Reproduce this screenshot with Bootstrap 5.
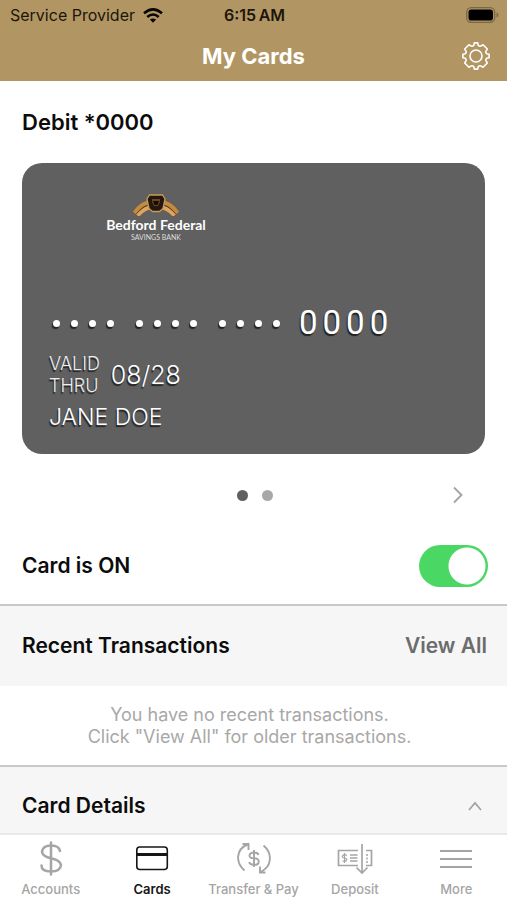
<!DOCTYPE html>
<html lang="en">
<head>
<meta charset="utf-8">
<meta name="viewport" content="width=device-width, initial-scale=1">
<title>My Cards</title>
<link href="https://cdn.jsdelivr.net/npm/bootstrap@5.3.0/dist/css/bootstrap.min.css" rel="stylesheet">
<style>
  body { font-family: Inter, "Liberation Sans", sans-serif; color: #0c0c0c; background: #fff; }
  svg { display: block; }
  .app-header { background: #b19664; }
  .status-bar { height: 30px; font-size: 16px; line-height: 20px; padding: 0 8px 0 10px; color: #1c150b; }
  .title-bar { height: 51px; padding: 0 16px; color: #fff; }
  .title-bar h1 { font-size: 22px; line-height: 28px; }
  .page-pad { padding-left: 22px; padding-right: 20px; }
  .card-pad { padding: 0 22px; }
  .section-title { font-size: 21px; line-height: 28px; font-weight: 600; margin: 0; }
  .debit-row { height: 82px; }
  .debit-row .section-title { font-size: 22px; }
  .debit-card { background: #606060; border-radius: 20px; height: 291px; padding: 31px 27px 22px; color: #fff; text-shadow: -1px 2px 1px #222; }
  .bank-logo { width: 104px; margin-left: 55px; text-shadow: none; }
  .bank-name { font: 700 14px/18px Lato, sans-serif; white-space: nowrap; }
  .bank-sub { font: 400 7px/7px Lato, sans-serif; color: #ddd; }
  .card-number { font-family: Roboto, sans-serif; font-size: 33px; line-height: 38px; margin-bottom: 11px; }
  .digit-group { gap: 5px; margin-left: 19px; }
  .mask-group { gap: 11px; padding-left: 4px; margin-right: 18px; }
  .mask-group i { width: 7px; height: 7px; border-radius: 50%; background: #fff; box-shadow: -1px 2px 1px #222; }
  .mask-group:nth-child(3) { margin-right: 0; }
  .valid-row { gap: 11px; margin-bottom: 5px; }
  .valid-label { font-size: 18px; line-height: 22px; color: #eee; font-weight: 300; }
  .valid-date { font-size: 25px; line-height: 32px; font-weight: 300; }
  .holder { font-size: 23px; line-height: 30px; font-weight: 300; }
  .pager { height: 82px; padding: 0 40px 0 42px; }
  .pager-dots { gap: 14px; }
  .pager-dot { width: 11px; height: 11px; border-radius: 50%; border: 0; padding: 0; background: #a8a8a8; }
  .pager-dot.current { background: #606060; }
  .plain-btn { border: 0; padding: 0; background: none; color: inherit; }
  .switch-row { height: 59px; margin-bottom: 9px; padding-right: 19px; }
  .switch-row .form-check-input { width: 69px; height: 42px; border: 0; margin: 0; background-color: #4bd763;
    background-image: radial-gradient(circle at center, #fff 18px, transparent 19px); background-size: 42px 42px; background-position: right center; background-repeat: no-repeat; border-radius: 21px; }
  .switch-row .form-check-input:not(:checked) { background-color: #ccc; background-position: left center; }
  .band { background: #f6f6f6; border-top: 2px solid #c8c8c8; height: 82px; }
  .band-short { height: 68px; padding-top: 12px; }
  .band-link { color: #6c6c6c; }
  .empty-note { height: 79px; font-size: 18px; line-height: 22px; color: #a8a8a8; padding-right: 8px; }
  .tab-bar { background: #fff; border-top: 2px solid #e9e9e9; height: 67px; }
  .tab-bar a { color: #a5a5a5; font-size: 13px; line-height: 16px; font-weight: 500; padding-top: 6px; gap: 4px; white-space: nowrap; flex: 1 1 0; }
  .tab-bar a.active { color: #161616; font-weight: 600; }
</style>
<script src="https://cdn.jsdelivr.net/npm/bootstrap@5.3.0/dist/js/bootstrap.bundle.min.js"></script>
</head>
<body>
<div class="d-flex flex-column min-vh-100">
  <header class="app-header">
    <div class="status-bar row g-0 align-items-center">
      <div class="col d-flex align-items-center gap-2 text-nowrap">
        <span>Service Provider</span>
        <svg width="20" height="15" viewBox="0 0 20 15" fill="none" stroke="#080604" stroke-width="2.6" aria-label="Wi-Fi"><path d="M1 5.3Q10-2.5 19 5.3"/><path d="M4.2 9Q10 4 15.8 9"/><path d="M10 14.7 6.9 11.6Q10 9.2 13.1 11.6Z" fill="#080604" stroke="none"/></svg>
      </div>
      <div class="col-auto fw-semibold">6:15&#8201;AM</div>
      <div class="col d-flex justify-content-end">
        <svg width="33" height="16" viewBox="0 0 33 16" aria-label="Battery"><rect x=".7" y=".7" width="28" height="14.6" rx="4.5" fill="none" stroke="#7b6845" stroke-width="1.3"/><rect x="2.5" y="2.5" width="24.5" height="11" rx="2.8"/><path d="M30.5 5.5q2 .7 2 2.5t-2 2.5z" fill="#7b6845"/></svg>
      </div>
    </div>
    <div class="title-bar row g-0 align-items-center">
      <div class="col"></div>
      <h1 class="col-auto fw-bold mb-0">My Cards</h1>
      <div class="col d-flex justify-content-end">
        <button class="plain-btn" type="button" aria-label="Settings">
          <svg width="30" height="30" viewBox="0 0 30 30" fill="none" stroke="#fff" stroke-width="1.6" stroke-linejoin="round"><circle cx="15" cy="15" r="6"/><path d="M12.8 4.4 13.3 1.9h3.400L17.200 4.400Q18.500 5.500 19.700 5.100L22 3.700 26.300 8 24.900 10.300Q24.500 11.500 25.600 12.800L28.100 13.300v3.400L25.600 17.200Q24.500 18.500 24.900 19.700L26.300 22 22 26.300 19.700 24.900Q18.500 24.500 17.200 25.600L16.700 28.100h-3.400L12.800 25.600Q11.500 24.500 10.300 24.900L8 26.300 3.700 22 5.100 19.700Q5.500 18.500 4.400 17.200L1.900 16.700v-3.400L4.400 12.800Q5.500 11.500 5.100 10.300L3.700 8 8 3.700 10.300 5.100Q11.500 5.500 12.800 4.400Z"/></svg>
        </button>
      </div>
    </div>
  </header>

  <main class="flex-grow-1">
    <div class="card-pad">
      <div class="debit-row d-flex align-items-center"><h2 class="section-title">Debit *0000</h2></div>
      <section class="debit-card d-flex flex-column justify-content-between" aria-label="Debit card">
        <div class="bank-logo text-center d-flex flex-column align-items-center">
          <svg width="46" height="22" viewBox="0 0 46 22"><g fill="none"><path d="M1.5 19Q9 8 19 8M44.500 19Q37 8 27 8" stroke="#c68a3c" stroke-width="4"/><path d="M4.500 21.500Q12 13 20 13M41.500 21.500Q34 13 26 13" stroke="#e0a55a" stroke-width="4"/><path d="M3 20.300Q11 10.600 19 10.500M43 20.300Q35 10.600 27 10.500" stroke="#4b3214" stroke-width=".8"/></g><path d="M16.500 1h13l2.500 4-2 9.500-3.500 3h-7l-3.500-3-2-9.500z" fill="#24170d" stroke="#c69a5a" stroke-width="1.300"/><path d="M19 5h8v3l-2 4h-4l-2-4z" fill="#6b4522"/><path d="M20 7h6l-1.500 4h-3z" fill="#120b06"/></svg>
          <div class="bank-name">Bedford Federal</div>
          <div class="bank-sub">SAVINGS BANK</div>
        </div>
        <div>
          <div class="card-number d-flex align-items-center">
            <span class="mask-group d-flex"><i></i><i></i><i></i><i></i></span>
            <span class="mask-group d-flex"><i></i><i></i><i></i><i></i></span>
            <span class="mask-group d-flex"><i></i><i></i><i></i><i></i></span>
            <span class="digit-group d-flex"><span>0</span><span>0</span><span>0</span><span>0</span></span>
          </div>
          <div class="valid-row d-flex align-items-center">
            <div class="valid-label">VALID<br>THRU</div>
            <div class="valid-date">08/28</div>
          </div>
          <div class="holder">JANE DOE</div>
        </div>
      </section>
    </div>

    <div class="pager row g-0 align-items-center">
      <div class="col"></div>
      <div class="pager-dots col-auto d-flex">
        <button type="button" class="pager-dot current" aria-label="Card 1"></button>
        <button type="button" class="pager-dot" aria-label="Card 2"></button>
      </div>
      <div class="col d-flex justify-content-end">
        <button type="button" class="plain-btn" aria-label="Next card"><svg width="18" height="18" viewBox="0 0 18 18" fill="none" stroke="#a4a4a4" stroke-width="1.900"><path d="m5 1.500 7.500 7.500L5 16.500"/></svg></button>
      </div>
    </div>

    <div class="switch-row page-pad d-flex align-items-center justify-content-between">
      <label class="section-title" for="cardOn">Card is ON</label>
      <div class="form-switch p-0 d-flex"><input class="form-check-input" type="checkbox" role="switch" id="cardOn" checked></div>
    </div>

    <section>
      <div class="band page-pad d-flex align-items-center justify-content-between">
        <h2 class="section-title">Recent Transactions</h2>
        <a href="#" class="section-title band-link text-decoration-none">View All</a>
      </div>
      <p class="empty-note text-center d-flex align-items-center justify-content-center mb-0">You have no recent transactions.<br>Click "View All" for older transactions.</p>
    </section>

    <div class="band band-short page-pad d-flex align-items-center justify-content-between">
      <h2 class="section-title">Card Details</h2>
      <button type="button" class="plain-btn" aria-label="Collapse card details"><svg width="24" height="14" viewBox="0 0 24 14" fill="none" stroke="#a4a4a4" stroke-width="1.800"><path d="m6 11 6-7 6 7"/></svg></button>
    </div>
  </main>

  <nav class="tab-bar d-flex sticky-bottom" aria-label="Main">
    <a href="#" class="d-flex flex-column align-items-center text-decoration-none">
      <svg width="36" height="36" viewBox="0 0 36 36" fill="none" stroke="currentColor" stroke-width="2.500" stroke-linecap="round"><path d="M18 1.500v32M27 10Q26 4.500 18 4.500T9 10.500Q9 15.500 18 17.200T28 24Q27.500 30.500 18 30.500T8.500 24.500"/></svg>
      Accounts</a>
    <a href="#" class="active d-flex flex-column align-items-center text-decoration-none" aria-current="page">
      <svg width="36" height="36" viewBox="0 0 36 36" fill="none" stroke="currentColor"><rect x="2.800" y="6" width="30.500" height="22.500" rx="3" stroke-width="1.600"/><path d="M3 13.500h30" stroke-width="3"/></svg>
      Cards</a>
    <a href="#" class="d-flex flex-column align-items-center text-decoration-none">
      <svg width="36" height="36" viewBox="0 0 36 36" fill="none" stroke="currentColor" stroke-width="1.900"><path d="M8.500 29.500C-.5 22-.5 8.500 11.500 3.500M6.500 3h6v6M27.500 4.500C36.500 12 36.500 25.500 24.500 31M29.500 31.500h-5.500v-6"/><path d="M18 9v17M22.500 14Q22 11.500 18 11.500T13.500 14.300 18 17.300 22.700 20.800 18 23.800 13.200 21"/></svg>
      Transfer &amp; Pay</a>
    <a href="#" class="d-flex flex-column align-items-center text-decoration-none">
      <svg width="36" height="36" viewBox="0 0 36 36" fill="none" stroke="currentColor" stroke-width="1.700"><path d="M21 9.500H1.500v15H21M29 9.500h5.500v15H29M25 3v29M19.500 26.500l5.500 5.500 5.500-5.500"/><path d="M13 14h7.500M13 17h7.500M13 20h7.500" stroke-width="1.300"/><path d="M7.500 12v10M9.800 14.500Q7.500 12.800 5.800 14.500T7.500 17 9.300 19.500 5.500 19.800" stroke-width="1.200"/><path d="M30 13v2M30 16.500v2M30 20v2" stroke-width="1.500"/></svg>
      Deposit</a>
    <a href="#" class="d-flex flex-column align-items-center text-decoration-none">
      <svg width="36" height="36" viewBox="0 0 36 36" fill="none" stroke="currentColor" stroke-width="1.900"><path d="M2 10h32M2 18h32M2 26h32"/></svg>
      More</a>
  </nav>
</div>
</body>
</html>
